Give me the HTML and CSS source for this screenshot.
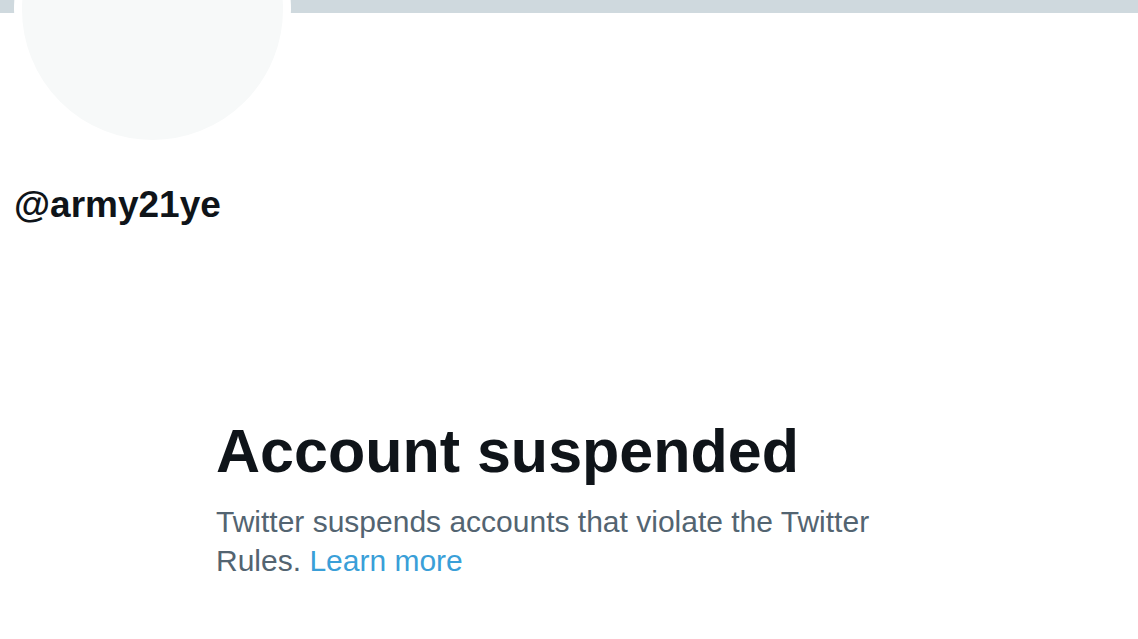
FILE: index.html
```html
<!DOCTYPE html>
<html lang="en">
<head>
<meta charset="utf-8">
<title>Account suspended</title>
<link rel="stylesheet" href="styles.css">
</head>
<body>
<div class="page">
  <div class="banner"></div>
  <div class="avatar"></div>
  <div class="handle">@army21ye</div>
  <div class="notice">
    <h1 class="title">Account suspended</h1>
    <p class="desc">Twitter suspends accounts that violate the Twitter Rules. <a class="link" href="#">Learn more</a></p>
  </div>
</div>
</body>
</html>
```
FILE: styles.css
```css
html, body {
  margin: 0;
  padding: 0;
  background: #ffffff;
}
.page {
  width: 1138px;
  height: 639px;
  overflow: hidden;
  font-family: "Liberation Sans", Arial, sans-serif;
}
.banner {
  height: 13px;
  background: #cfd9de;
}
.avatar {
  width: 261px;
  height: 261px;
  margin-top: -142px;
  margin-left: 14px;
  border: 8px solid #ffffff;
  border-radius: 50%;
  background: #f7f9f9;
  position: relative;
}
.handle {
  margin-top: 35px;
  margin-left: 14px;
  font-size: 37px;
  line-height: 44px;
  font-weight: 700;
  color: #0f1419;
}
.notice {
  margin-left: 216px;
  margin-top: 188px;
  width: 680px;
}
.title {
  margin: 0;
  font-size: 61px;
  line-height: 72px;
  font-weight: 700;
  color: #0f1419;
}
.desc {
  margin: 15px 0 0;
  font-size: 30px;
  line-height: 39px;
  color: #536471;
}
.link {
  color: #3a9fd8;
  text-decoration: none;
}
```
